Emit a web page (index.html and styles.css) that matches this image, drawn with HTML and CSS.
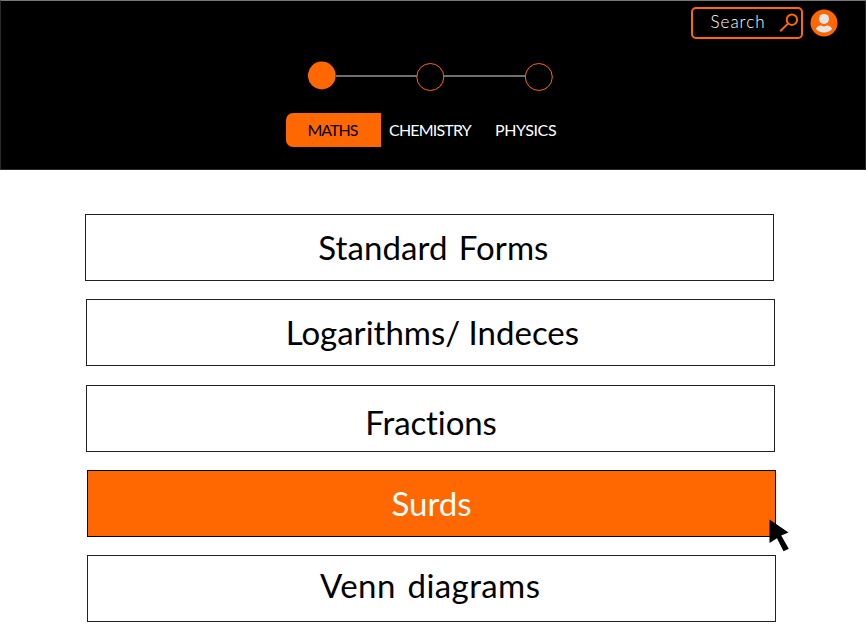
FILE: index.html
```html
<!DOCTYPE html>
<html lang="en">
<head>
<meta charset="utf-8">
<title>Subjects</title>
<link rel="stylesheet" href="styles.css">
</head>
<body>
<header class="header">
  <div class="tools">
    <div class="search">
      <span class="search-label">Search</span>
      <svg class="search-icon" width="20" height="20" viewBox="0 0 20 20"><circle cx="12.9" cy="6.7" r="5.2"/><path d="M9.2 10.4 1.2 18.2"/></svg>
    </div>
    <svg class="avatar" width="28" height="28" viewBox="0 0 28 28"><circle cx="14" cy="14" r="13.5" fill="#ff6700"/><circle cx="14" cy="9.9" r="5" fill="#e6e6e6"/><path d="M6 19.8C7.3 17.500 9.600 16.300 11 16.600Q14 18.200 17 16.600C18.400 16.300 20.700 17.500 22 19.800C20.500 22.300 17.500 23.600 14 23.600S7.500 22.300 6 19.800Z" fill="#e6e6e6"/></svg>
  </div>
  <svg class="steps" width="246" height="30" viewBox="0 0 246 30"><path d="M28 15H109M136 15H218" stroke="#706f6f" stroke-width="2"/><circle cx="13.800" cy="14.500" r="13.900" fill="#ff6700"/><circle class="ring" cx="122.300" cy="16" r="13.500"/><circle class="ring" cx="230.800" cy="16" r="13.500"/></svg>
  <nav class="tabs">
    <a class="tab tab-active">MATHS</a>
    <a class="tab chemistry">CHEMISTRY</a>
    <a class="tab physics">PHYSICS</a>
  </nav>
</header>
<main class="topics">
  <a class="topic standard"><span>Standard Forms</span></a>
  <a class="topic logs"><span>Logarithms/ Indeces</span></a>
  <a class="topic fractions"><span>Fractions</span></a>
  <a class="topic surds"><span>Surds</span>
    <svg class="cursor" width="21" height="34" viewBox="0 0 21 34"><path d="M.5.500V24L8 19.200 14.500 32.300 19.800 29.800 12.200 16.500 19.500 13.500Z"/></svg>
  </a>
  <a class="topic venn"><span>Venn diagrams</span></a>
</main>
</body>
</html>
```
FILE: styles.css
```css
* { box-sizing: border-box; }
body {
  margin: 0;
  height: 628px;
  overflow: hidden;
  background: #fff;
  color: #000;
  font-family: Lato, "Liberation Sans", sans-serif;
  font-variant-ligatures: none;
}
.header {
  height: 170px;
  background: #000;
  border: 1px solid #2b2a29;
  border-top-color: #777;
}
.tools {
  display: flex;
  justify-content: flex-end;
  gap: 7px;
  height: 60px;
  padding: 6px 27px 0 0;
}
.search {
  display: flex;
  width: 112px;
  height: 32px;
  border: 2px solid #ff6700;
  border-radius: 5px;
}
.search-label {
  width: 69px;
  padding-left: 17.500px;
  color: #fff;
  font-size: 17px;
  font-weight: 300;
  line-height: 26px;
  letter-spacing: 1px;
}
.search-icon {
  margin: 4px 0 0 17px;
  fill: none;
  stroke: #ff6700;
  stroke-width: 2;
  flex: none;
}
.avatar { margin-top: 2px; }
.steps { display: block; margin: 0 0 0 307px; }
.ring { fill: #000; stroke: #ff6700; stroke-width: 1; }
.tabs { display: flex; margin: 22px 0 0 285px; }
.tab {
  height: 34px;
  color: #fff;
  font-size: 16px;
  line-height: 34px;
  white-space: nowrap;
}
.tab-active {
  width: 95px;
  margin-right: 8px;
  padding-left: 21.500px;
  border-radius: 7px 0 0 7px;
  background: #ff6700;
  color: #000;
  letter-spacing: -1px;
}
.chemistry { width: 106px; letter-spacing: -.8px; }
.physics { letter-spacing: -.4px; }
.topics {
  display: grid;
  gap: 18.300px;
  padding: 44px 0 0 85.400px;
}
.topic {
  display: flex;
  justify-content: center;
  position: relative;
  width: 689px;
  height: 67px;
  border: 1px solid #222;
  font-size: 33px;
  line-height: 64px;
  white-space: nowrap;
}
.standard { padding-left: 7px; word-spacing: 2.500px; letter-spacing: .1px; }
.logs { margin-left: .5px; padding-left: 4px; }
.fractions { margin-left: .7px; padding-left: 1px; line-height: 72px; letter-spacing: -.1px; }
.surds { margin-left: 1.200px; padding-left: 1px; line-height: 64px; background: #ff6700; color: #fff; border-color: #000; }
.venn { margin-left: 1.300px; padding-right: 2px; line-height: 59px; word-spacing: 3px; letter-spacing: .4px; }
.cursor { position: absolute; left: 681px; top: 48px; }
```
